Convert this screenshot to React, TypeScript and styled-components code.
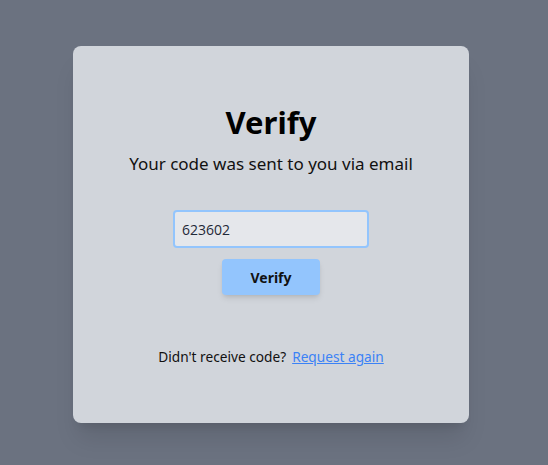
import React from "react"
import styled, { createGlobalStyle } from "styled-components"

const GlobalStyle = createGlobalStyle`
  html, body {
    margin: 0;
    padding: 0;
    background: #6b7280;
    font-family: "Noto Sans", "Open Sans", sans-serif;
  }
`

const Page = styled.div`
  padding: 46px 0 0 73px;
  min-height: 465px;
  box-sizing: border-box;
`

const Card = styled.div`
  width: 396px;
  height: 377px;
  box-sizing: border-box;
  background: #d1d5db;
  border-radius: 8px;
  box-shadow: 0 20px 25px -5px rgba(0, 0, 0, 0.1), 0 8px 10px -6px rgba(0, 0, 0, 0.1);
  display: flex;
  flex-direction: column;
  align-items: center;
  padding-top: 56px;
`

const Title = styled.h1`
  margin: 0;
  font-size: 31px;
  line-height: 40px;
  font-weight: 700;
  color: #000;
`

const Subtitle = styled.p`
  margin: 8px 0 0;
  font-size: 17px;
  line-height: 28px;
  color: #111;
`

const CodeInput = styled.input`
  margin-top: 32px;
  width: 196px;
  height: 38px;
  box-sizing: border-box;
  background: #e5e7eb;
  border: 2px solid #93c5fd;
  border-radius: 4px;
  padding: 0 7px;
  font-family: "Open Sans", sans-serif;
  font-size: 14px;
  color: #1f2937;
  outline: none;
`

const Button = styled.button`
  margin-top: 11px;
  width: 98px;
  height: 36px;
  border: none;
  border-radius: 4px;
  background: #93c5fd;
  font-family: inherit;
  font-size: 14px;
  font-weight: 700;
  color: #111;
  box-shadow: 0 4px 6px -1px rgba(0, 0, 0, 0.1), 0 2px 4px -2px rgba(0, 0, 0, 0.1);
`

const Footer = styled.p`
  margin: 52px 0 0;
  font-size: 13.7px;
  line-height: 20px;
  color: #111;
`

const Link = styled.a`
  margin-left: 6px;
  color: #3b82f6;
  text-decoration: underline;
`

const App = () => (
  <Page>
    <GlobalStyle />
    <Card>
      <Title>Verify</Title>
      <Subtitle>Your code was sent to you via email</Subtitle>
      <CodeInput defaultValue="623602" />
      <Button>Verify</Button>
      <Footer>
        Didn't receive code?
        <Link href="#">Request again</Link>
      </Footer>
    </Card>
  </Page>
)

export default App
